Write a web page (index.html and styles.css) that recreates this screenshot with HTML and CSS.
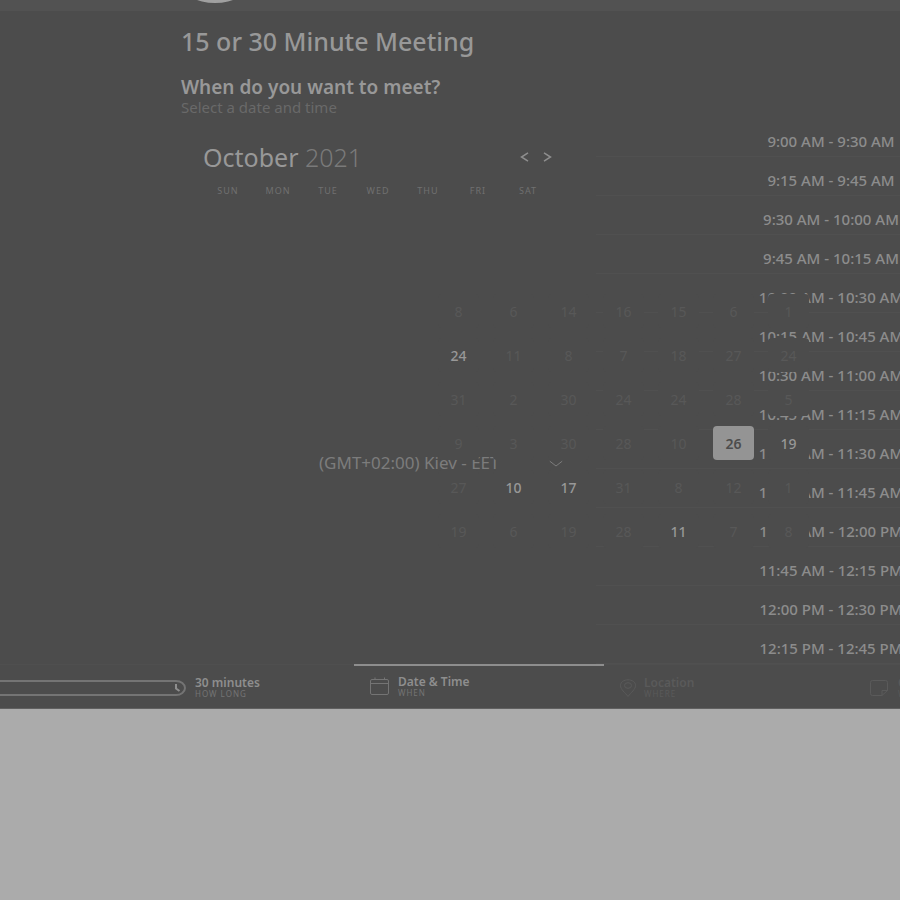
FILE: index.html
```html
<!DOCTYPE html>
<html lang="en">
<head>
<meta charset="utf-8">
<meta name="viewport" content="width=device-width, initial-scale=1">
<title>15 or 30 Minute Meeting</title>
<link rel="stylesheet" href="styles.css">
</head>
<body>
<div class="booking">
  <header class="topbar"><span class="avatar"></span></header>
  <main class="content">
    <section class="picker">
      <h1>15 or 30 Minute Meeting</h1>
      <h2>When do you want to meet?</h2>
      <p class="hint">Select a date and time</p>
      <div class="month">
        <h3>October <span>2021</span></h3>
        <div class="arrows">
          <button type="button" aria-label="Previous month"><svg width="9" height="10" viewBox="0 0 9 10"><path d="M8 .8 1.500 5 8 9.200"/></svg></button>
          <button type="button" aria-label="Next month"><svg width="9" height="10" viewBox="0 0 9 10"><path d="M1 .8 7.500 5 1 9.200"/></svg></button>
        </div>
      </div>
      <div class="weekdays"><span>SUN</span><span>MON</span><span>TUE</span><span>WED</span><span>THU</span><span>FRI</span><span>SAT</span></div>
      <div class="zone">
        <select aria-label="Time zone"><option>(GMT+02:00) Kiev - EET</option></select>
        <svg width="14" height="7" viewBox="0 0 14 7"><path d="M.8 1.200 7 6l6.200-4.800"/></svg>
      </div>
    </section>
    <section class="times">
      <button type="button">9:00 AM - 9:30 AM</button>
      <button type="button">9:15 AM - 9:45 AM</button>
      <button type="button">9:30 AM - 10:00 AM</button>
      <button type="button">9:45 AM - 10:15 AM</button>
      <button type="button">10:00 AM - 10:30 AM</button>
      <button type="button">10:15 AM - 10:45 AM</button>
      <button type="button">10:30 AM - 11:00 AM</button>
      <button type="button">10:45 AM - 11:15 AM</button>
      <button type="button">11:00 AM - 11:30 AM</button>
      <button type="button">11:15 AM - 11:45 AM</button>
      <button type="button">11:30 AM - 12:00 PM</button>
      <button type="button">11:45 AM - 12:15 PM</button>
      <button type="button">12:00 PM - 12:30 PM</button>
      <button type="button">12:15 PM - 12:45 PM</button>
    </section>
    <div class="dates">
      <button type="button" disabled>8</button><button type="button" disabled>6</button><button type="button" disabled>14</button><button type="button" disabled>16</button><button type="button" disabled>15</button><button type="button" disabled>6</button><button type="button" disabled>1</button>
      <button type="button">24</button><button type="button" disabled>11</button><button type="button" disabled>8</button><button type="button" disabled>7</button><button type="button" disabled>18</button><button type="button" disabled>27</button><button type="button" disabled>24</button>
      <button type="button" disabled>31</button><button type="button" disabled>2</button><button type="button" disabled>30</button><button type="button" disabled>24</button><button type="button" disabled>24</button><button type="button" disabled>28</button><button type="button" disabled>5</button>
      <button type="button" disabled>9</button><button type="button" disabled>3</button><button type="button" disabled>30</button><button type="button" disabled>28</button><button type="button" disabled>10</button><button type="button" class="selected">26</button><button type="button">19</button>
      <button type="button" disabled>27</button><button type="button">10</button><button type="button">17</button><button type="button" disabled>31</button><button type="button" disabled>8</button><button type="button" disabled>12</button><button type="button" disabled>1</button>
      <button type="button" disabled>19</button><button type="button" disabled>6</button><button type="button" disabled>19</button><button type="button" disabled>28</button><button type="button">11</button><button type="button" disabled>7</button><button type="button" disabled>8</button>
    </div>
  </main>
  <nav class="steps">
    <a href="#" class="step duration">
      <svg width="186" height="18" viewBox="0 0 186 18"><path d="M-9 2H176a9 7 0 0 1 0 14H-9" /><path class="hand" d="M176 5v4.500l3.500 2.500"/></svg>
      <span class="label"><b>30 minutes</b><small>HOW LONG</small></span>
    </a>
    <a href="#" class="step active">
      <svg width="20" height="18" viewBox="0 0 20 18"><rect x=".5" y="2.500" width="18" height="15" rx="1.500"/><path d="M.5 6.500h18M5 .5v2M14.500 .5v2"/></svg>
      <span class="label"><b>Date &amp; Time</b><small>WHEN</small></span>
    </a>
    <a href="#" class="step idle">
      <svg width="16" height="18" viewBox="0 0 16 18"><path d="M8 17.500C5 13.500.5 10.500.5 6.500.5 3 4 .8 8 .8s7.500 2.200 7.500 5.700c0 4-4.500 7-7.500 11Z"/><ellipse cx="8" cy="6.500" rx="3.500" ry="2.800"/></svg>
      <span class="label"><b>Location</b><small>WHERE</small></span>
    </a>
    <a href="#" class="step idle">
      <svg width="20" height="18" viewBox="0 0 20 18"><path d="M12 16.500H2.500a2 2 0 0 1-2-2v-11a2 2 0 0 1 2-2h13a2 2 0 0 1 2 2v8L12 16.500v-5h5.500"/></svg>
      <span class="label"><b>Confirm</b><small>WHO</small></span>
    </a>
  </nav>
</div>
</body>
</html>
```
FILE: styles.css
```css
* { box-sizing: border-box; }
body { margin: 0; background: #ababab; color: #989898; font-family: "Noto Sans", "Open Sans", sans-serif; overflow-x: hidden; }
h1, h2, h3, p { margin: 0; }
button, select { border: 0; padding: 0; background: none; color: inherit; font: inherit; }
svg { fill: none; stroke: currentColor; flex: none; }
.booking { background: #4c4c4c; overflow: hidden; border-bottom: 1px solid #606060; }
.topbar { height: 11px; background: #525252; display: flex; align-items: flex-end; padding: 0 0 8px 181px; }
.avatar { width: 68px; height: 40px; flex: none; border-radius: 50%; background: #a0a0a0; }
.content { position: relative; display: flex; }
.picker { flex: 0 0 415px; margin-left: 181px; padding-top: 14px; }
h1 { font-size: 25px; line-height: 32px; font-weight: 500; }
h2 { margin-top: 18px; font-size: 19px; line-height: 24px; font-weight: 600; }
.hint { font-size: 15px; line-height: 16px; color: #696969; }
.month { display: flex; justify-content: space-between; align-items: center; margin: 24px 44px 0 22px; height: 36px; }
h3 { font-size: 25px; line-height: 32px; font-weight: 400; }
h3 span { color: #7a7a7a; font-weight: 300; }
.arrows { display: flex; gap: 14px; color: #8e8e8e; }
.arrows button { display: flex; }
.arrows svg { stroke-width: 1.5; }
.weekdays { display: grid; grid-template-columns: repeat(7, 50px); margin: 8px 0 0 22px; font-size: 9px; line-height: 16px; letter-spacing: 1px; text-align: center; color: #707070; }
.zone { display: flex; align-items: center; justify-content: space-between; width: 244px; height: 24px; margin: 252px 0 0 138px; color: #7c7c7c; font-size: 17px; }
select { appearance: none; width: 220px; line-height: 24px; }
.times { flex: 0 0 470px; padding-top: 107px; }
.times button { display: block; width: 100%; height: 39px; padding-top: 7px; border-bottom: 1px solid #505050; font-size: 15px; line-height: 20px; font-weight: 500; color: #8c8c8c; }
.dates { position: absolute; top: 283px; left: 438px; display: grid; grid-template-columns: repeat(7, 41px); grid-auto-rows: 34px; gap: 10px 14px; font-size: 14px; }
.dates button { background: #4c4c4c; border-radius: 4px; font-weight: 500; }
.dates button:disabled { color: #585858; font-weight: 400; }
.dates .selected { background: #949494; color: #4c4c4c; font-weight: 600; }
.steps { display: grid; grid-template-columns: 354px 250px 250px 250px; height: 44px; }
.step { display: flex; align-items: center; gap: 9px; padding-top: 2px; color: #747474; text-decoration: none; border-top: 1px solid #4f4f4f; }
.step.active { padding: 0 0 2px 16px; gap: 8px; border-top: 2px solid #8e8e8e; }
.step.idle { padding-left: 16px; gap: 8px; color: #5a5a5a; }
.duration svg { stroke-width: 2; }
.hand { stroke: #8e8e8e; }
.label { display: flex; flex-direction: column; }
b { font-size: 12px; line-height: 13px; font-weight: 600; }
.duration b, .active b { color: #8e8e8e; }
small { font-size: 8px; line-height: 10px; letter-spacing: 1px; }
```
